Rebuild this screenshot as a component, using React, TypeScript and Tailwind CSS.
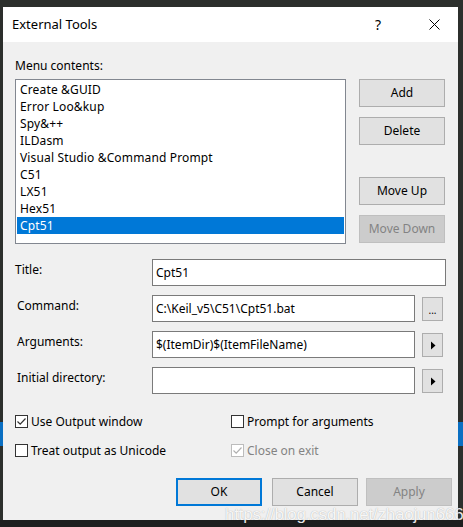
import React from "react";

const items = [
  "Create &GUID",
  "Error Loo&kup",
  "Spy&++",
  "ILDasm",
  "Visual Studio &Command Prompt",
  "C51",
  "LX51",
  "Hex51",
  "Cpt51",
];

function Btn({
  children,
  disabled,
  primary,
  className = "",
}: {
  children: React.ReactNode;
  disabled?: boolean;
  primary?: boolean;
  className?: string;
}) {
  return (
    <div
      className={
        "flex items-center justify-center text-[12px] " +
        (disabled
          ? "border border-[#bfbfbf] bg-[#cccccc] text-[#838383] "
          : primary
          ? "border-2 border-[#0078d7] bg-[#e1e1e1] text-black "
          : "border border-[#adadad] bg-[#e1e1e1] text-black ") +
        className
      }
    >
      {children}
    </div>
  );
}

function Check({ checked, disabled }: { checked?: boolean; disabled?: boolean }) {
  return (
    <div
      className={
        "flex h-[13px] w-[13px] items-center justify-center border bg-white " +
        (disabled ? "border-[#bcbcbc]" : "border-[#333333]")
      }
    >
      {checked && (
        <svg width="11" height="11" viewBox="0 0 11 11">
          <path
            d="M1.5 5.5 L4.2 8.2 L9.5 2.5"
            fill="none"
            stroke={disabled ? "#b0b0b0" : "#333333"}
            strokeWidth="1.2"
          />
        </svg>
      )}
    </div>
  );
}

function Arrow() {
  return (
    <svg width="6" height="9" viewBox="0 0 6 9">
      <path d="M1 0.5 L5.5 4.5 L1 8.5 Z" fill="#000" />
    </svg>
  );
}

export default function App() {
  return (
    <div
      className="relative h-[527px] w-[463px] overflow-hidden bg-[#2c2f2c] pl-[3px] pt-[7px] text-black"
      style={{ fontFamily: '"Noto Sans", "Open Sans", sans-serif' }}
    >
      {/* taskbar bits peeking out behind */}
      <div className="absolute left-0 top-[422px] h-[24px] w-[3px] bg-[#0a6fc2]" />
      <div className="absolute right-0 top-[422px] h-[24px] w-[5px] bg-[#0a6fc2]" />
      <div className="absolute bottom-0 left-0 h-[7px] w-full bg-[#1e1e1e]" />

      <div className="flex h-[513px] w-[455px] flex-col bg-[#f0f0f0]">
        {/* Title bar */}
        <div className="flex h-[35px] shrink-0 items-center bg-white pl-[9px]">
          <span className="text-[13px]">External Tools</span>
          <span className="ml-auto text-[14px]">?</span>
          <svg width="11" height="11" viewBox="0 0 11 11" className="ml-[48px] mr-[18px]">
            <path d="M0.5 0.5 L10.5 10.5 M10.5 0.5 L0.5 10.5" stroke="#000" strokeWidth="1" />
          </svg>
        </div>

        <div className="flex flex-col pl-[12px] pt-[15px]">
          <div className="text-[12px] leading-[17px]">Menu contents:</div>

          <div className="mt-[5px] flex gap-[13px]">
            <div className="h-[165px] w-[331px] border border-[#828790] bg-white p-[1px]">
              {items.map((it, i) => (
                <div
                  key={it}
                  className={
                    "h-[17px] pl-[3px] text-[12px] leading-[18px] tracking-[0.15px] " +
                    (i === items.length - 1 ? "bg-[#0078d7] text-white" : "")
                  }
                >
                  {it}
                </div>
              ))}
            </div>
            <div className="flex flex-col">
              <Btn className="h-[28px] w-[86px]">Add</Btn>
              <Btn className="mt-[10px] h-[28px] w-[86px]">Delete</Btn>
              <Btn className="mt-[32px] h-[28px] w-[86px]">Move Up</Btn>
              <Btn disabled className="mt-[10px] h-[28px] w-[86px]">
                Move Down
              </Btn>
            </div>
          </div>

          {/* Fields */}
          <div className="mt-[15px] flex items-start">
            <div className="w-[137px] pt-[2px] text-[12px] leading-[17px]">Title:</div>
            <div className="flex h-[27px] w-[294px] items-center border border-[#7a7a7a] bg-white pl-[3px] text-[12px]">
              Cpt51
            </div>
          </div>

          <div className="mt-[9px] flex items-start">
            <div className="w-[137px] pl-[2px] pt-[2px] text-[12px] leading-[17px]">Command:</div>
            <div className="flex h-[27px] w-[263px] items-center border border-[#7a7a7a] bg-white pl-[3px] text-[12px]">
              C:\Keil_v5\C51\Cpt51.bat
            </div>
            <Btn className="ml-[7px] mt-[2px] h-[24px] w-[21px] !items-end pb-[5px] !text-[10px] leading-none">
              ...
            </Btn>
          </div>

          <div className="mt-[9px] flex items-start">
            <div className="w-[137px] pl-[2px] pt-[2px] text-[12px] leading-[17px]">Arguments:</div>
            <div className="flex h-[27px] w-[263px] items-center border border-[#7a7a7a] bg-white pl-[3px] text-[12px]">
              $(ItemDir)$(ItemFileName)
            </div>
            <Btn className="ml-[7px] mt-[2px] h-[24px] w-[21px]">
              <Arrow />
            </Btn>
          </div>

          <div className="mt-[9px] flex items-start">
            <div className="w-[137px] pl-[2px] pt-[2px] text-[12px] leading-[17px]">Initial directory:</div>
            <div className="h-[27px] w-[263px] border border-[#7a7a7a] bg-white" />
            <Btn className="ml-[7px] mt-[2px] h-[24px] w-[21px]">
              <Arrow />
            </Btn>
          </div>

          {/* Checkboxes */}
          <div className="mt-[21px] grid grid-cols-[216px_1fr] gap-y-[16px] text-[12px] leading-[13px]">
            <label className="flex items-center gap-[3px]">
              <Check checked />
              <span>Use Output window</span>
            </label>
            <label className="flex items-center gap-[3px]">
              <Check />
              <span>Prompt for arguments</span>
            </label>
            <label className="flex items-center gap-[3px]">
              <Check />
              <span>Treat output as Unicode</span>
            </label>
            <label className="flex items-center gap-[3px] text-[#838383]">
              <Check checked disabled />
              <span>Close on exit</span>
            </label>
          </div>

          {/* Bottom buttons */}
          <div className="mt-[21px] flex gap-[10px] pl-[161px]">
            <Btn primary className="h-[28px] w-[86px]">OK</Btn>
            <Btn className="h-[28px] w-[86px]">Cancel</Btn>
            <Btn disabled className="-ml-[2px] h-[28px] w-[86px]">Apply</Btn>
          </div>
        </div>
      </div>

      {/* watermark */}
      <div
        className="absolute left-[225px] top-[502px] text-[17px] tracking-[-0.2px] text-white/90"
        style={{ fontFamily: '"Liberation Sans", Arial, sans-serif', textShadow: "0 0 1px rgba(0,0,0,0.35)" }}
      >
        https://blog.csdn.net/zhaojun666
      </div>
    </div>
  );
}
